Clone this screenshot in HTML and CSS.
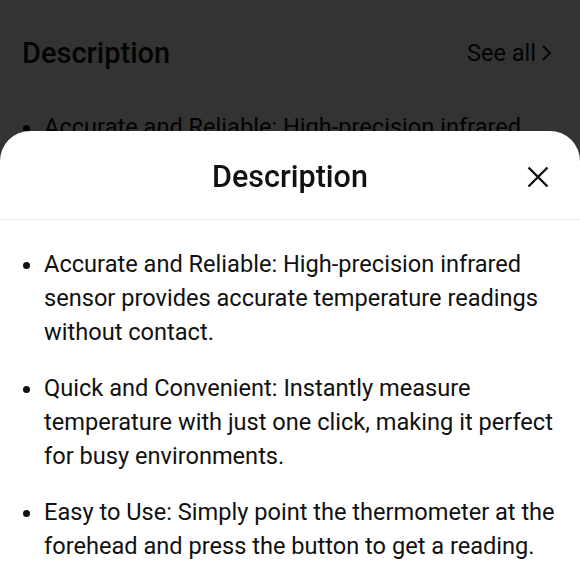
FILE: index.html
```html
<!DOCTYPE html>
<html lang="en">
<head>
    <meta charset="UTF-8">
    <meta name="viewport" content="width=device-width, initial-scale=1.0">
    <title>Description</title>
    <link rel="stylesheet" href="styles.css">
</head>
<body>
    <div class="page">
        <div class="section-head">
            <h2>Description</h2>
            <a class="see-all" href="#">See all
                <svg width="12" height="18" viewBox="0 0 12 18"><path d="M3 2l7 7-7 7" fill="none" stroke="currentColor" stroke-width="1.8"/></svg>
            </a>
        </div>
        <ul class="desc-list">
            <li>Accurate and Reliable: High-precision infrared sensor provides accurate temperature readings without contact.</li>
        </ul>
    </div>

    <div class="overlay"></div>

    <div class="sheet">
        <div class="sheet-head">
            <h3>Description</h3>
            <button class="close" aria-label="Close">
                <svg width="22" height="22" viewBox="0 0 22 22"><path d="M1.5 1.5L20.5 20.5M20.5 1.5L1.5 20.5" fill="none" stroke="currentColor" stroke-width="2.4"/></svg>
            </button>
        </div>
        <ul class="sheet-list">
            <li>Accurate and Reliable: High-precision infrared sensor provides accurate temperature readings without contact.</li>
            <li>Quick and Convenient: Instantly measure temperature with just one click, making it perfect for busy environments.</li>
            <li>Easy to Use: Simply point the thermometer at the forehead and press the button to get a reading.</li>
        </ul>
    </div>
</body>
</html>
```

FILE: styles.css
```css
:root {
    --overlay: rgba(0, 0, 0, 0.8);
    --text-color: #111111;
    --border-color: #ebebeb;
}

html, body {
    margin: 0;
    padding: 0;
    height: 100%;
    overflow: hidden;
}

body {
    font-family: Roboto, "Liberation Sans", sans-serif;
    background-color: #ffffff;
    color: var(--text-color);
}

.page {
    padding: 0 22px;
}

.section-head {
    display: flex;
    justify-content: space-between;
    align-items: center;
    padding-top: 34px;
}

.section-head h2 {
    margin: 0;
    font-size: 29px;
    font-weight: 500;
    line-height: 38px;
}

.see-all {
    display: flex;
    align-items: center;
    gap: 4px;
    font-size: 23.5px;
    color: var(--text-color);
    text-decoration: none;
    padding-right: 6px;
}

.desc-list {
    margin: 38px 0 0;
    padding-left: 22px;
    font-size: 23.6px;
    line-height: 34px;
}

.overlay {
    position: fixed;
    inset: 0;
    background-color: var(--overlay);
}

.sheet {
    position: fixed;
    left: 0;
    right: 0;
    top: 131px;
    bottom: 0;
    background-color: #ffffff;
    border-radius: 30px 30px 0 0;
}

.sheet-head {
    position: relative;
    height: 88px;
    display: flex;
    align-items: center;
    justify-content: center;
    border-bottom: 1px solid var(--border-color);
}

.sheet-head h3 {
    margin: 2px 0 0;
    font-size: 30.5px;
    font-weight: 500;
}

.close {
    position: absolute;
    right: 31px;
    top: 35px;
    padding: 0;
    border: none;
    background: none;
    color: var(--text-color);
    line-height: 0;
    cursor: pointer;
}

.sheet-list {
    margin: 0;
    padding: 27px 14px 0 44px;
    font-size: 23.6px;
    line-height: 34px;
}

.sheet-list li {
    margin-bottom: 22px;
    padding-left: 0;
}
```
